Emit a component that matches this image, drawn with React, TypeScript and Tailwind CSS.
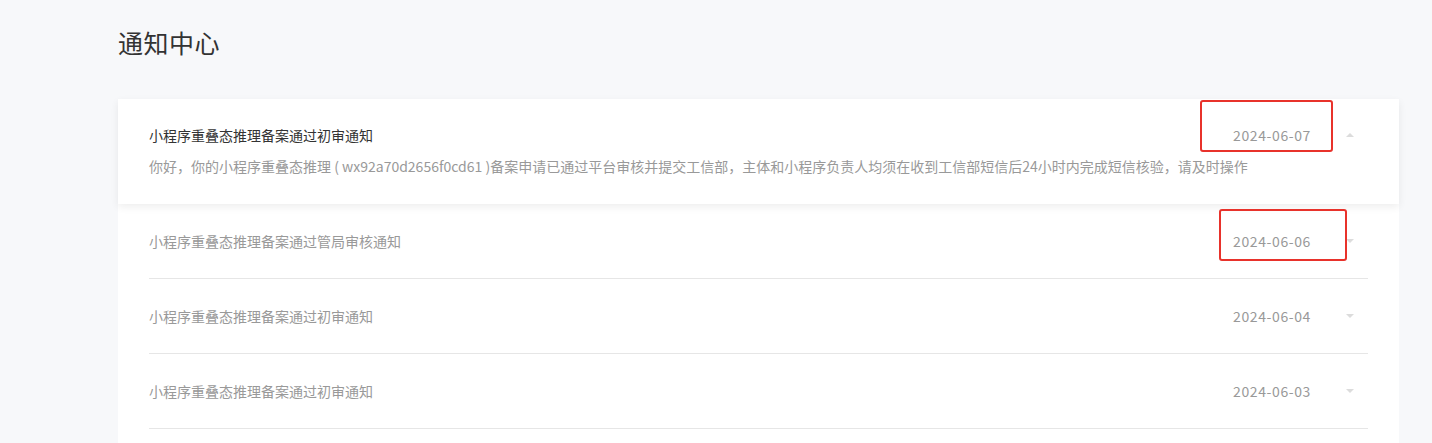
const font = { fontFamily: '"Noto Sans CJK SC", "Noto Sans", sans-serif' }

interface Notice {
	title: string
	date: string
}

const notices: Notice[] = [
	{ title: "小程序重叠态推理备案通过管局审核通知", date: "2024-06-06" },
	{ title: "小程序重叠态推理备案通过初审通知", date: "2024-06-04" },
	{ title: "小程序重叠态推理备案通过初审通知", date: "2024-06-03" },
]

const Arrow = ({ up }: { up?: boolean }) => (
	<span
		className={`ml-[35px] h-0 w-0 border-x-[4px] border-x-transparent ${
			up ? "border-b-[4px] border-b-[#dcdcdc]" : "border-t-[4px] border-t-[#dcdcdc]"
		}`}
	/>
)

export default function App() {
	return (
		<div
			className="relative min-h-screen bg-[#f7f8fa] pl-[118px] pr-[33px] pt-[24px]"
			style={font}
		>
			<h1 className="text-[25px] leading-[36px] tracking-[0.5px] text-[#333]">通知中心</h1>

			<div className="mt-[39px] bg-white pb-[16px]">
				<div className="relative z-10 bg-white px-[31px] pb-[28px] pt-[26px] shadow-[0_3px_8px_rgba(0,0,0,0.07)]">
					<div className="flex h-[20px] items-center">
						<span className="flex-1 text-[14px] text-[#333]">小程序重叠态推理备案通过初审通知</span>
						<span className="text-[14px] tracking-[0.6px] text-[#999]">2024-06-07</span>
						<Arrow up />
						<span className="w-[14px]" />
					</div>
					<p className="mt-[11px] text-[14px] leading-[20px] text-[#999]">
						你好，你的小程序重叠态推理 ( wx92a70d2656f0cd61 )备案申请已通过平台审核并提交工信部，主体和小程序负责人均须在收到工信部短信后24小时内完成短信核验，请及时操作
					</p>
				</div>

				<ul className="px-[31px]">
					{notices.map((n, i) => (
						<li
							key={i}
							className="flex h-[75px] items-center border-b border-[#e6e6e6]"
						>
							<span className="flex-1 text-[14px] text-[#999]">{n.title}</span>
							<span className="text-[14px] tracking-[0.6px] text-[#999]">{n.date}</span>
							<Arrow />
							<span className="w-[14px]" />
						</li>
					))}
				</ul>
			</div>

			{/* annotation boxes */}
			<div className="pointer-events-none absolute left-[1200px] top-[100px] z-20 h-[52px] w-[133px] rounded-[3px] border-2 border-[#e8322b]" />
			<div className="pointer-events-none absolute left-[1219px] top-[209px] z-20 h-[52px] w-[128px] rounded-[3px] border-2 border-[#e8322b]" />
		</div>
	)
}
